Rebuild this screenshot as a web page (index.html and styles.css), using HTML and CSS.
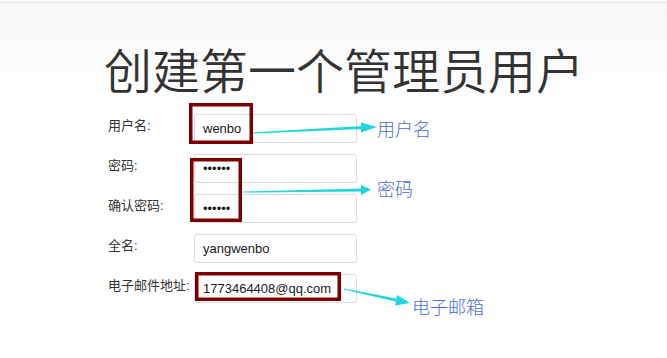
FILE: index.html
```html
<!DOCTYPE html>
<html lang="zh-CN">
<head>
<meta charset="utf-8">
<title>创建第一个管理员用户</title>
<link rel="stylesheet" href="styles.css">
</head>
<body>
<div class="topbar"></div>
<main class="page">
  <h1 class="title">创建第一个管理员用户</h1>
  <form class="form">
    <div class="row"><label class="label">用户名:</label><input class="field" type="text" value="wenbo"></div>
    <div class="row"><label class="label">密码:</label><input class="field" type="password" value="123456"></div>
    <div class="row"><label class="label">确认密码:</label><input class="field" type="password" value="123456"></div>
    <div class="row"><label class="label">全名:</label><input class="field" type="text" value="yangwenbo"></div>
    <div class="row"><label class="label">电子邮件地址:</label><input class="field" type="text" value="1773464408@qq.com"></div>
  </form>
</main>
<svg class="marks" width="667" height="358" viewBox="0 0 667 358" xmlns="http://www.w3.org/2000/svg">
  <g fill="none" stroke="#7d0000" stroke-width="3.5">
    <rect x="190.75" y="104.75" width="60.5" height="37.5"/>
    <rect x="191.75" y="159.75" width="48.5" height="60.5"/>
    <rect x="196.75" y="273.75" width="142.5" height="25.5"/>
  </g>
  <g fill="#1ed6dc">
    <polygon points="253,132.4 253,133.6 363,129 363,126"/>
    <polygon points="361,122.5 377,127 361,132.5"/>
    <polygon points="243,191.5 243,192.5 363,191.5 363,188.5"/>
    <polygon points="361,185 371,189.6 361,195"/>
    <polygon points="344.1,288.5 343.9,289.5 395.7,301.5 396.3,298.5"/>
    <polygon points="397,295 410,303 395,305.5"/>
  </g>
</svg>
<span class="note note-user">用户名</span>
<span class="note note-pass">密码</span>
<span class="note note-mail">电子邮箱</span>
</body>
</html>
```
FILE: styles.css
```css
html, body {
  margin: 0;
  padding: 0;
  background: #fff;
}
body {
  position: relative;
  width: 667px;
  height: 358px;
  overflow: hidden;
  font-family: "Liberation Sans", "Noto Sans CJK SC", sans-serif;
  color: #333;
}
.topbar {
  height: 2px;
  background: #fafafa;
  border-bottom: 1px solid #e4e4e4;
}
.page {
  height: 355px;
  padding-left: 104px;
  box-sizing: border-box;
  background: linear-gradient(#f7f7f7 0px, #fbfbfb 50px, #fff 100px);
  overflow: hidden;
}
.title {
  margin: 41px 0 0;
  font-family: "Noto Sans CJK SC", sans-serif;
  font-size: 48px;
  line-height: 48px;
  font-weight: 350;
  color: #333;
  white-space: nowrap;
}
.form {
  margin: 22px 0 0;
  padding-left: 4px;
  display: flex;
  flex-direction: column;
  gap: 11px;
}
.row {
  display: flex;
  align-items: flex-start;
}
.label {
  width: 86px;
  padding-top: 2px;
  font-size: 13px;
  line-height: 20px;
  color: #333;
  white-space: nowrap;
}
.field {
  box-sizing: border-box;
  width: 163px;
  height: 29px;
  margin: 0;
  padding: 0 8px;
  border: 1px solid #dcdcdc;
  border-radius: 3px;
  background: #fff;
  font-family: "Liberation Sans", sans-serif;
  font-size: 13px;
  color: #1a1a1a;
  outline: none;
}
.marks {
  position: absolute;
  left: 0;
  top: 0;
}
.note {
  position: absolute;
  font-family: "Noto Sans CJK SC", sans-serif;
  font-weight: 300;
  font-size: 18px;
  line-height: 18px;
  color: #4a6bd6;
  white-space: nowrap;
}
.note-user { left: 377px; top: 119px; }
.note-pass { left: 377px; top: 179px; }
.note-mail { left: 412px; top: 297px; }
```
